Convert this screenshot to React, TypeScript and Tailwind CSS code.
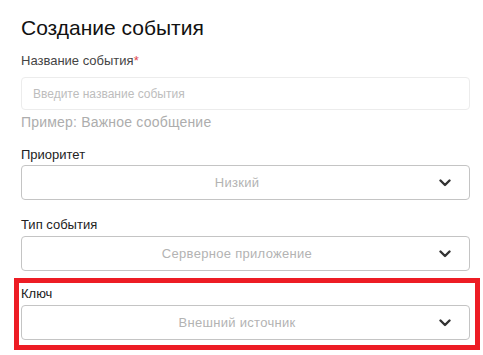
const selects = [
  { label: 'Приоритет', value: 'Низкий' },
  { label: 'Тип события', value: 'Серверное приложение' },
];

function Chevron() {
  return (
    <svg width="12" height="8" viewBox="0 0 12 8" className="shrink-0">
      <polyline
        points="1.5,1.5 6,6 10.5,1.5"
        fill="none"
        stroke="#333"
        strokeWidth="2.4"
        strokeLinecap="round"
        strokeLinejoin="round"
      />
    </svg>
  );
}

function SelectBox({ value }: { value: string }) {
  return (
    <div className="w-[449px] h-[35px] flex items-center gap-[6px] pl-[19px] pr-[18px] border border-[#c4c4c4] rounded-[4px] bg-white">
      <span className="flex-1 text-center text-[13px] tracking-[0.3px] text-[#b3b3b3]">{value}</span>
      <Chevron />
    </div>
  );
}

function Label({ children, className }: { children: React.ReactNode; className?: string }) {
  return <div className={`text-[13px] leading-[16px] text-[#222] ${className ?? ''}`}>{children}</div>;
}

export default function App() {
  return (
    <div
      className="w-[483px] h-[355px] bg-white pl-[21px] pt-[15px] overflow-hidden"
      style={{ fontFamily: '"Liberation Sans", Arial, sans-serif' }}
    >
      <h1 className="text-[21px] leading-[26px] text-[#111] font-normal">Создание события</h1>

      <Label className="mt-[12px] text-[#444]">
        Название события<span className="text-[#e0474c]">*</span>
      </Label>
      <div className="mt-[8px] w-[449px] h-[33px] flex items-center px-[11px] border border-[#ececec] rounded-[4px] text-[12px] text-[#bdbdbd]">
        Введите название события
      </div>
      <div className="mt-[4px] text-[14px] leading-[16px] tracking-[0.2px] text-[#adadad]">
        Пример: Важное сообщение
      </div>

      {selects.map((s, i) => (
        <div key={s.label} className="mt-[17px]">
          <Label>{s.label}</Label>
          <div className={i === 0 ? 'mt-[2px]' : 'mt-[3px]'}>
            <SelectBox value={s.value} />
          </div>
        </div>
      ))}

      <div className="mt-[7px] -ml-[7px] w-[466px] border-[5px] border-[#ed1c24] pl-[2px] pt-[3px] pb-[5px]">
        <Label className="text-[#111]">Ключ</Label>
        <div className="mt-[3px]">
          <SelectBox value="Внешний источник" />
        </div>
      </div>
    </div>
  );
}
